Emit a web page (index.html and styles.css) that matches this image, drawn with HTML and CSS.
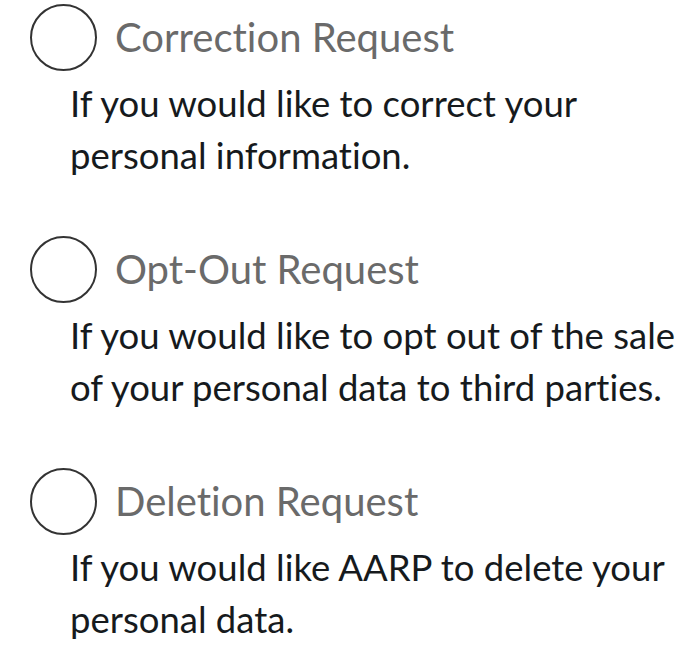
FILE: index.html
```html
<!DOCTYPE html>
<html lang="en">
<head>
<meta charset="utf-8">
<title>Request Types</title>
<link rel="stylesheet" href="styles.css">
</head>
<body>
<div class="list">
  <div class="option">
    <label class="row">
      <span class="radio"></span>
      <span class="title">Correction Request</span>
    </label>
    <p class="desc">If you would like to correct your personal information.</p>
  </div>
  <div class="option">
    <label class="row">
      <span class="radio"></span>
      <span class="title">Opt-Out Request</span>
    </label>
    <p class="desc">If you would like to opt out of the sale of your personal data to third parties.</p>
  </div>
  <div class="option">
    <label class="row">
      <span class="radio"></span>
      <span class="title">Deletion Request</span>
    </label>
    <p class="desc">If you would like AARP to delete your personal data.</p>
  </div>
</div>
</body>
</html>
```
FILE: styles.css
```css
html, body {
  margin: 0;
  padding: 0;
  background: #ffffff;
}
body {
  font-family: Lato, "Noto Sans", sans-serif;
  font-variant-ligatures: none;
  font-feature-settings: "liga" 0, "clig" 0;
}
.list {
  display: flex;
  flex-direction: column;
  padding-top: 4px;
}
.option {
  display: flex;
  flex-direction: column;
  height: 232px;
}
.option:last-child {
  height: auto;
}
.row {
  display: flex;
  align-items: center;
  gap: 18px;
  padding-left: 30px;
  height: 67px;
}
.radio {
  box-sizing: border-box;
  width: 67px;
  height: 67px;
  border: 2.5px solid #333333;
  border-radius: 50%;
  flex: none;
}
.title {
  font-size: 40px;
  color: #6a6a6a;
  line-height: 67px;
}
.desc {
  margin: 6px 0 0 70px;
  font-size: 36.5px;
  line-height: 52px;
  color: #161a1d;
  width: 620px;
}
```
